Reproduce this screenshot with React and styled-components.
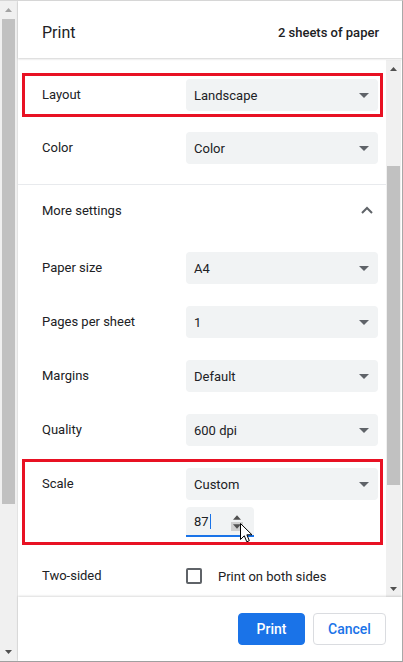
import React from "react";
import styled, { createGlobalStyle } from "styled-components";

const Global = createGlobalStyle`
  html, body { margin: 0; padding: 0; overflow: hidden; background: #fff; }
  body { font-family: Roboto, "Noto Sans", "Liberation Sans", sans-serif; color: #202124; }
  * { box-sizing: border-box; }
`;

const Frame = styled.div`
  width: 403px;
  height: 662px;
  display: flex;
  border-top: 1px solid #d6d6d6;
  border-bottom: 1px solid #a0a0a0;
  border-right: 1px solid #a8a8a8;
  overflow: hidden;
`;

const ScrollBar = styled.div`
  width: ${(p) => p.$w}px;
  flex: none;
  background: #f0f0f0;
  display: flex;
  flex-direction: column;
  align-items: center;
  border-right: ${(p) => (p.$edge ? "1px solid #e3e3e3" : "none")};
`;

const ArrowBtn = styled.div`
  height: ${(p) => p.$h}px;
  width: 100%;
  flex: none;
  display: flex;
  align-items: center;
  justify-content: center;
  svg { display: block; }
`;

const Track = styled.div`
  flex: 1;
  width: 100%;
  display: flex;
  flex-direction: column;
  align-items: center;
`;

const Thumb = styled.div`
  width: ${(p) => p.$w}px;
  background: #c1c1c1;
  flex: none;
`;

const Dialog = styled.div`
  flex: 1;
  display: flex;
  flex-direction: column;
  min-width: 0;
`;

const Header = styled.div`
  height: 57px;
  flex: none;
  display: flex;
  align-items: center;
  justify-content: space-between;
  padding: 0 23px 0 24px;
  position: relative;
  z-index: 2;
  box-shadow: 0 1px 2px rgba(0, 0, 0, 0.18);
`;

const Title = styled.div`
  font-size: 16px;
  font-weight: 400;
  color: #202124;
  padding-top: 6px;
`;

const Sheets = styled.div`
  font-size: 13px;
  font-weight: 500;
  color: #202124;
  padding-top: 6px;
`;

const Body = styled.div`
  flex: 1;
  display: flex;
  min-height: 0;
  margin-top: 2px;
  margin-right: 1px;
`;

const Content = styled.div`
  flex: 1;
  overflow: hidden;
  padding-top: 8px;
`;

const Row = styled.div`
  position: relative;
  display: grid;
  grid-template-columns: 144px 192px;
  padding-left: 24px;
  align-items: ${(p) => (p.$top ? "start" : "center")};
  height: ${(p) => p.$h || 54}px;
  padding-top: ${(p) => p.$pt || 0}px;
`;

const Label = styled.div`
  font-size: 13px;
  color: #202124;
  line-height: 32px;
`;

const Select = styled.div`
  height: 32px;
  background: #f1f3f4;
  border-radius: 4px;
  display: flex;
  align-items: center;
  justify-content: space-between;
  padding: 0 9px 0 8px;
  font-size: 13px;
  color: #202124;
`;

const Caret = styled.svg`
  display: block;
`;

const Divider = styled.div`
  height: 1px;
  background: #e8eaed;
  margin-top: 10px;
`;

const MoreRow = styled.div`
  height: 50px;
  display: flex;
  align-items: center;
  justify-content: space-between;
  padding: 0 13px 0 24px;
  font-size: 13px;
  margin-bottom: 6px;
`;

const Highlight = styled.div`
  position: absolute;
  left: 4px;
  right: 3px;
  top: ${(p) => p.$t}px;
  bottom: ${(p) => p.$b}px;
  border: 3px solid #e81123;
  pointer-events: none;
`;

const Stack = styled.div`
  display: flex;
  flex-direction: column;
  gap: 7px;
`;

const NumberBox = styled.div`
  position: relative;
  width: 68px;
  height: 30px;
  background: #f1f3f4;
  border-radius: 4px 4px 0 0;
  border-bottom: 2px solid #1a73e8;
  display: flex;
  align-items: center;
  padding-left: 8px;
  font-size: 13px;
  color: #202124;
`;

const TextCaret = styled.span`
  display: inline-block;
  width: 1px;
  height: 15px;
  background: #1a73e8;
  margin-left: 1px;
`;

const Spinner = styled.div`
  position: absolute;
  left: 45px;
  top: 6px;
  width: 12px;
  display: flex;
  flex-direction: column;
`;

const SpinPart = styled.div`
  height: 9px;
  display: flex;
  align-items: center;
  justify-content: center;
  background: ${(p) => (p.$hover ? "#cfcfcf" : "transparent")};
`;

const Cursor = styled.svg`
  position: absolute;
  left: 54px;
  top: 16px;
  display: block;
  overflow: visible;
`;

const CheckRow = styled.div`
  display: flex;
  align-items: center;
  gap: 16px;
  font-size: 13px;
`;

const Box = styled.div`
  width: 16px;
  height: 16px;
  border: 2px solid #5f6368;
  border-radius: 2px;
`;

const Footer = styled.div`
  height: 64px;
  flex: none;
  display: flex;
  justify-content: flex-end;
  align-items: flex-start;
  gap: 8px;
  padding: 16px 16px 0 0;
  position: relative;
  box-shadow: 0 -1px 2px rgba(0, 0, 0, 0.14);
  background: #fff;
`;

const Button = styled.button`
  height: 32px;
  padding: 0;
  width: ${(p) => p.$w}px;
  border-radius: 4px;
  font-family: Roboto, "Noto Sans", "Liberation Sans", sans-serif;
  font-size: 14px;
  font-weight: 500;
  border: 1px solid ${(p) => (p.$primary ? "#1a73e8" : "#dadce0")};
  background: ${(p) => (p.$primary ? "#1a73e8" : "#fff")};
  color: ${(p) => (p.$primary ? "#fff" : "#1a73e8")};
`;

const Down = () => (
  <Caret width="10" height="5" viewBox="0 0 10 5">
    <path d="M0 0 L10 0 L5 5 Z" fill="#5f6368" />
  </Caret>
);

const Tri = ({ up, color = "#505050", w = 7, h = 4 }) => (
  <svg width={w} height={h} viewBox="0 0 7 4">
    <path d={up ? "M0 4 L7 4 L3.5 0 Z" : "M0 0 L7 0 L3.5 4 Z"} fill={color} />
  </svg>
);

const SelectField = ({ value }) => (
  <Select>
    <span>{value}</span>
    <Down />
  </Select>
);

const Setting = ({ label, value, h }) => (
  <Row $h={h}>
    <Label>{label}</Label>
    <SelectField value={value} />
  </Row>
);

export default function App() {
  return (
    <>
      <Global />
      <Frame>
        <ScrollBar $w={18} $edge>
          <ArrowBtn $h={18}>
            <Tri up color="#a3a3a3" />
          </ArrowBtn>
          <Track>
            <Thumb $w={13} style={{ height: 485 }} />
          </Track>
          <ArrowBtn $h={18}>
            <Tri color="#505050" />
          </ArrowBtn>
        </ScrollBar>
        <Dialog>
          <Header>
            <Title>Print</Title>
            <Sheets>2 sheets of paper</Sheets>
          </Header>
          <Body>
            <Content>
              <Row>
                <Label>Layout</Label>
                <SelectField value="Landscape" />
                <Highlight $t={5} $b={5} />
              </Row>
              <Setting label="Color" value="Color" h={52} />
              <Divider />
              <MoreRow>
                <span>More settings</span>
                <svg width="12" height="8" viewBox="0 0 12 8">
                  <path d="M1 7 L6 2 L11 7" fill="none" stroke="#5f6368" strokeWidth="2" />
                </svg>
              </MoreRow>
              <Setting label="Paper size" value="A4" />
              <Setting label="Pages per sheet" value="1" />
              <Setting label="Margins" value="Default" />
              <Setting label="Quality" value="600 dpi" />
              <Row $top $h={92} $pt={11}>
                <Label>Scale</Label>
                <Stack>
                  <SelectField value="Custom" />
                  <NumberBox>
                    87<TextCaret />
                    <Spinner>
                      <SpinPart>
                        <Tri up color="#505050" w={8} h={5} />
                      </SpinPart>
                      <SpinPart $hover>
                        <Tri color="#505050" w={8} h={5} />
                      </SpinPart>
                    </Spinner>
                    <Cursor width="13" height="21" viewBox="0 0 13 21">
                      <path
                        d="M0.5 0.5 L0.5 16.5 L4.3 12.8 L6.8 18.8 L9.3 17.7 L6.9 11.8 L12 11.8 Z"
                        fill="#fff"
                        stroke="#000"
                        strokeWidth="1"
                        strokeLinejoin="round"
                      />
                    </Cursor>
                  </NumberBox>
                </Stack>
                <Highlight $t={2} $b={4} />
              </Row>
              <Row>
                <Label>Two-sided</Label>
                <CheckRow>
                  <Box />
                  <span>Print on both sides</span>
                </CheckRow>
              </Row>
            </Content>
            <ScrollBar $w={15}>
              <ArrowBtn $h={17}>
                <Tri up color="#505050" />
              </ArrowBtn>
              <Track>
                <Thumb $w={13} style={{ height: 319, marginTop: 89 }} />
              </Track>
              <ArrowBtn $h={17}>
                <Tri color="#505050" />
              </ArrowBtn>
            </ScrollBar>
          </Body>
          <Footer>
            <Button $primary $w={67}>Print</Button>
            <Button $w={73}>Cancel</Button>
          </Footer>
        </Dialog>
      </Frame>
    </>
  );
}
